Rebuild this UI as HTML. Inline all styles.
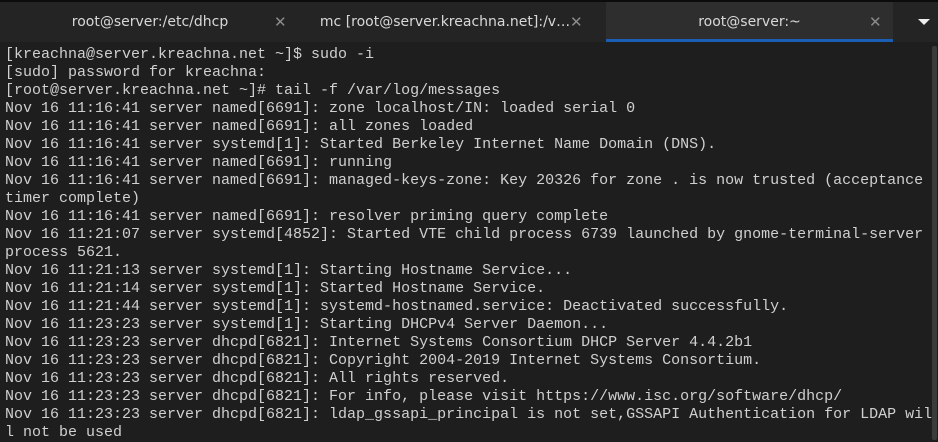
<!DOCTYPE html>
<html><head><style>
html,body{margin:0;padding:0;width:938px;height:440px;overflow:hidden;background:#1e1e1e;}
.bar{position:absolute;left:0;top:0;width:938px;height:42px;background:#242424;border-top:2px solid #0c0c0c;box-sizing:border-box;}
.tab{position:absolute;top:0;height:40px;color:#d8d8d8;font:14px "DejaVu Sans","Liberation Sans",sans-serif;line-height:40px;text-align:center;}
.x{position:absolute;top:0;color:#8a8a8a;font:15px "DejaVu Sans",sans-serif;line-height:40px;}
.active{background:#2e2e2e;}
.ul{position:absolute;left:606px;top:39px;width:287px;height:3px;background:#1a5fb4;}
.tri{position:absolute;left:918px;top:17px;width:0;height:0;border-left:6px solid transparent;border-right:6px solid transparent;border-top:6px solid #eee;}
pre{position:absolute;left:5px;top:46px;margin:0;font:15px/18px "Liberation Mono","DejaVu Sans Mono",monospace;color:#d0d0d0;}
.sb{position:absolute;left:932px;top:46px;width:5px;height:394px;background:#3b3b3b;border-radius:2px;}
</style></head><body>
<div class="bar">
<div class="tab" style="left:0;width:300px;">root@server:/etc/dhcp</div>
<div class="x" style="left:274px;">✕</div>
<div class="tab" style="left:300px;width:290px;">mc [root@server.kreachna.net]:/v…</div>
<div class="x" style="left:570px;">✕</div>
<div class="tab active" style="left:606px;width:287px;">root@server:~</div>
<div class="x" style="left:869px;">✕</div>
<div class="tri"></div>
</div>
<div class="ul"></div>
<div class="sb"></div>
<pre>[kreachna@server.kreachna.net ~]$ sudo -i
[sudo] password for kreachna:
[root@server.kreachna.net ~]# tail -f /var/log/messages
Nov 16 11:16:41 server named[6691]: zone localhost/IN: loaded serial 0
Nov 16 11:16:41 server named[6691]: all zones loaded
Nov 16 11:16:41 server systemd[1]: Started Berkeley Internet Name Domain (DNS).
Nov 16 11:16:41 server named[6691]: running
Nov 16 11:16:41 server named[6691]: managed-keys-zone: Key 20326 for zone . is now trusted (acceptance
timer complete)
Nov 16 11:16:41 server named[6691]: resolver priming query complete
Nov 16 11:21:07 server systemd[4852]: Started VTE child process 6739 launched by gnome-terminal-server
process 5621.
Nov 16 11:21:13 server systemd[1]: Starting Hostname Service...
Nov 16 11:21:14 server systemd[1]: Started Hostname Service.
Nov 16 11:21:44 server systemd[1]: systemd-hostnamed.service: Deactivated successfully.
Nov 16 11:23:23 server systemd[1]: Starting DHCPv4 Server Daemon...
Nov 16 11:23:23 server dhcpd[6821]: Internet Systems Consortium DHCP Server 4.4.2b1
Nov 16 11:23:23 server dhcpd[6821]: Copyright 2004-2019 Internet Systems Consortium.
Nov 16 11:23:23 server dhcpd[6821]: All rights reserved.
Nov 16 11:23:23 server dhcpd[6821]: For info, please visit https://www.isc.org/software/dhcp/
Nov 16 11:23:23 server dhcpd[6821]: ldap_gssapi_principal is not set,GSSAPI Authentication for LDAP wil
l not be used</pre>
</body></html>
